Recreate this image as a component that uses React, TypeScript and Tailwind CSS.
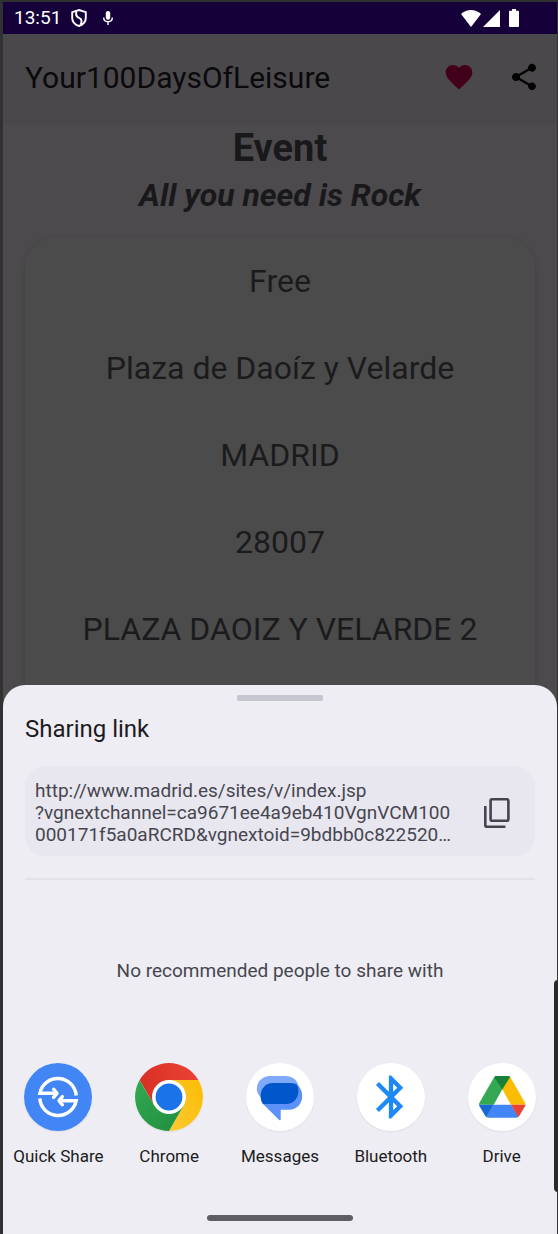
import type { ReactNode } from "react";

const details = [
  "Free",
  "Plaza de Daoíz y Velarde",
  "MADRID",
  "28007",
  "PLAZA DAOIZ Y VELARDE 2",
];

const link = [
  "http://www.madrid.es/sites/v/index.jsp",
  "?vgnextchannel=ca9671ee4a9eb410VgnVCM100",
  "000171f5a0aRCRD&vgnextoid=9bdbb0c822520…",
];

function QuickShareIcon() {
  return (
    <svg viewBox="0 0 68 68" className="size-full" aria-hidden="true">
      <circle cx="34" cy="34" r="34" fill="#4285f4" />
      <g fill="none" stroke="#fff" strokeWidth="3.4">
        <path d="M52.2 32.500A18.4 18.4 0 0 0 15.800 30.300H32.500" />
        <path d="M29.600 26.200L33 30.300L29.600 34.400" strokeLinejoin="round" strokeLinecap="round" />
        <path d="M15.800 35.500A18.4 18.4 0 0 0 52.200 37.700H35.500" />
        <path d="M38.400 33.600L35 37.700L38.400 41.800" strokeLinejoin="round" strokeLinecap="round" />
      </g>
    </svg>
  );
}

function ChromeIcon() {
  return (
    <svg viewBox="0 0 68 68" className="size-full" aria-hidden="true">
      <defs>
        <linearGradient id="cr" x1="0" x2="1">
          <stop offset="0" stopColor="#d93025" />
          <stop offset="1" stopColor="#ea4335" />
        </linearGradient>
        <linearGradient id="cy" x1="0" y1="1" x2="1" y2="0">
          <stop offset="0" stopColor="#fcc934" />
          <stop offset="1" stopColor="#fbbc04" />
        </linearGradient>
        <linearGradient id="cg" x1="1" y1="1" x2="0" y2="0">
          <stop offset="0" stopColor="#1e8e3e" />
          <stop offset="1" stopColor="#34a853" />
        </linearGradient>
      </defs>
      <path d="M4.6 17A34 34 0 0 1 63.4 17H34L19.3 42.5Z" fill="url(#cr)" />
      <path d="M63.4 17A34 34 0 0 1 34 68L48.7 42.5L34 17Z" fill="url(#cy)" />
      <path d="M34 68A34 34 0 0 1 4.6 17L19.3 42.5H48.7Z" fill="url(#cg)" />
      <circle cx="34" cy="34" r="17" fill="#fff" />
      <circle cx="34" cy="34" r="13.4" fill="#1a73e8" />
    </svg>
  );
}

function MessagesIcon() {
  return (
    <svg viewBox="0 0 68 68" className="size-full" aria-hidden="true">
      <path
        d="M24 13H39C45.500 13 50.500 16 52.300 22V35H16C12.500 32.500 10.800 29.500 10.800 26C10.800 18.500 16.500 13 24 13Z"
        fill="#80a8fb"
      />
      <path
        d="M26 20H49C53.500 22.500 56.200 27.500 56.200 33C56.200 41 50.500 46.800 43 46.800H34.700V56.300C34.700 57.300 33.800 57.500 33.200 56.900L17.500 41.500C14.500 38 14 33 15 30C16 24 20 20 26 20Z"
        fill="#5c90fa"
      />
      <path
        d="M27 20H41C46 20 50 20.500 51.200 22.500C52.200 25 52.500 27.500 52.300 29.500C51.500 36.500 46.500 41 40 41H17C15.300 38.500 14.700 35.500 14.700 32.500C14.700 25.500 20 20 27 20Z"
        fill="#0057cc"
      />
    </svg>
  );
}

function BluetoothIcon() {
  return (
    <svg viewBox="0 0 68 68" className="size-full" aria-hidden="true">
      <path
        transform="translate(8.200 8.200) scale(2.15)"
        d="M17.710 7.710L12 2h-1v7.590L6.410 5 5 6.410 10.590 12 5 17.590 6.410 19 11 14.410V22h1l5.710-5.710-4.300-4.290 4.300-4.290zM13 5.830l1.880 1.880L13 9.590V5.830zm1.880 10.460L13 18.170v-3.760l1.880 1.880z"
        fill="#1e88f5"
      />
    </svg>
  );
}

function DriveIcon() {
  return (
    <svg viewBox="0 0 68 68" className="size-full" aria-hidden="true">
      <path d="M28.500 13H34L34.300 26.300L25.700 41.700H11C11 40.800 11.200 40 11.700 39.200L26 14.500C26.600 13.500 27.500 13 28.500 13Z" fill="#34a853" />
      <path d="M34 13H40C41 13 42 13.500 42.500 14.500L56.800 39.200C57.200 40 57.400 40.800 57.400 41.700H43L34.300 26.300Z" fill="#fbbc04" />
      <path d="M26.300 14.200C26.900 13.400 27.600 13 28.500 13H40C41 13 41.800 13.400 42.200 14L34.300 26.500Z" fill="#188038" />
      <path d="M25.700 41.700H43L50.500 53.500C49.800 54.300 49 54.700 48 54.700H20.500C19.500 54.700 18.700 54.400 18 53.700Z" fill="#4285f4" />
      <path d="M11 41.700H25.700L18.200 53.900C17.700 53.500 17.300 53 17 52.500L11.700 43.500C11.200 42.800 11 42.300 11 41.700Z" fill="#1967d2" />
      <path d="M43 41.700H57.400C57.400 42.400 57.200 43 56.800 43.600L51.500 52.500C51.200 53.100 50.700 53.600 50.200 53.900Z" fill="#ea4335" />
    </svg>
  );
}

const targets: { name: string; icon: ReactNode }[] = [
  { name: "Quick Share", icon: <QuickShareIcon /> },
  { name: "Chrome", icon: <ChromeIcon /> },
  { name: "Messages", icon: <MessagesIcon /> },
  { name: "Bluetooth", icon: <BluetoothIcon /> },
  { name: "Drive", icon: <DriveIcon /> },
];

function StatusBar() {
  return (
    <div className="flex h-8 items-center bg-[#15003a] pr-[38px] pl-[11px] text-white">
      <span className="text-[19px] leading-[34px]">13:51</span>
      <svg viewBox="0 0 16 18" className="ml-2.5 h-[18px] w-4" fill="none" stroke="#fff" strokeWidth="1.9" aria-hidden="true">
        <path d="M8 1L14.800 3.200V9C14.800 12.800 12.500 15.500 8 17C3.500 15.500 1.200 12.800 1.200 9V3.200Z" />
        <path d="M5.500 2.500C4.200 6 5.500 7.800 8.500 9.200C11 10.500 11 13 9.500 16" />
      </svg>
      <svg viewBox="0 0 10 14" className="ml-4 h-3.5 w-2.5" aria-hidden="true">
        <rect x="2.800" y="0" width="4.400" height="8.800" rx="2.200" fill="#fff" />
        <path d="M.7 6.500C.7 9 2.600 10.700 5 10.700S9.300 9 9.300 6.500M5 10.700V14" fill="none" stroke="#fff" strokeWidth="1.400" />
      </svg>
      <svg viewBox="0 0 20 17" className="ml-auto h-[17px] w-5" fill="#fff" aria-hidden="true">
        <path d="M0 4C6-1.300 14-1.300 20 4L10 17Z" />
      </svg>
      <svg viewBox="0 0 17 17" className="ml-0.5 size-[17px]" fill="#fff" aria-hidden="true">
        <path d="M17 0V17H0Z" />
      </svg>
      <svg viewBox="0 0 10 18" className="ml-[9px] h-[18px] w-2.5" fill="#fff" aria-hidden="true">
        <path d="M3 0H7V1.700H9C9.600 1.700 10 2.100 10 2.700V17C10 17.600 9.600 18 9 18H1C.4 18 0 17.600 0 17V2.700C0 2.100 .4 1.700 1 1.700H3Z" />
      </svg>
    </div>
  );
}

function AppBar() {
  return (
    <header className="flex h-[86px] items-center bg-[#4a484b] pr-[17px] pl-[22px] shadow-[0_2px_4px_#00000014]">
      <h1 className="text-[30px] text-[#0a090b]">Your100DaysOfLeisure</h1>
      <button type="button" aria-label="Favourite" className="ml-auto">
        <svg viewBox="0 0 24 24" className="size-8" fill="#42001a" aria-hidden="true">
          <path d="M12 21.350l-1.450-1.320C5.400 15.360 2 12.280 2 8.500 2 5.420 4.420 3 7.500 3c1.740 0 3.410.810 4.500 2.090C13.090 3.810 14.760 3 16.500 3 19.580 3 22 5.420 22 8.500c0 3.780-3.400 6.860-8.550 11.540L12 21.350z" />
        </svg>
      </button>
      <button type="button" aria-label="Share" className="ml-[33px]">
        <svg viewBox="0 0 24 24" className="size-8" fill="#000" aria-hidden="true">
          <path d="M18 16.080c-.760 0-1.440.300-1.960.770L8.910 12.700c.050-.230.090-.460.090-.700s-.040-.470-.090-.700l7.050-4.110c.540.500 1.250.810 2.040.810 1.660 0 3-1.340 3-3s-1.340-3-3-3-3 1.340-3 3c0 .240.040.470.090.700L8.040 9.810C7.500 9.310 6.790 9 6 9c-1.660 0-3 1.340-3 3s1.340 3 3 3c.790 0 1.500-.310 2.040-.810l7.120 4.160c-.050.210-.080.430-.080.650 0 1.610 1.310 2.920 2.920 2.920s2.920-1.310 2.920-2.920-1.310-2.920-2.920-2.920z" />
        </svg>
      </button>
    </header>
  );
}

function ShareSheet() {
  return (
    <section
      role="dialog"
      aria-label="Sharing link"
      className="absolute inset-x-0 bottom-0 flex flex-col rounded-t-[22px] bg-[#eeedf3] pt-2.5"
    >
      <div className="mx-auto h-1.5 w-[86px] rounded-xs bg-[#c6c6d0]" />
      <h2 className="mt-3 px-[22px] text-2xl leading-8 text-[#1b1b21]">Sharing link</h2>
      <div className="mx-[22px] mt-[21px] flex items-center justify-between rounded-[20px] bg-[#e8e7ef] pt-3.5 pr-[25px] pb-2.5 pl-2.5">
        <p className="text-[19px] leading-[22px] text-[#46464f]">
          {link.map((line) => (
            <span key={line} className="block">
              {line}
            </span>
          ))}
        </p>
        <button type="button" aria-label="Copy link">
          <svg viewBox="0 0 26 30" className="h-[30px] w-[26px]" fill="none" stroke="#46434f" strokeWidth="2.600" aria-hidden="true">
            <rect x="6.600" y="1.300" width="17.800" height="21.400" rx="1.500" />
            <path d="M1.300 8V27.200C1.300 28.100 1.900 28.700 2.800 28.700H21.400" />
          </svg>
        </button>
      </div>
      <hr className="mx-[22px] mt-[22px] border-t-2 border-[#e3e2e8]" />
      <p className="mt-[79px] text-center text-[19px] leading-6 text-[#46464f]">
        No recommended people to share with
      </p>
      <ul className="mt-20 grid grid-cols-5">
        {targets.map((target) => (
          <li key={target.name}>
            <button type="button" className="flex w-full flex-col items-center">
              <span className="size-[68px] rounded-full bg-white shadow-[0_1px_2px_#00000010]">
                {target.icon}
              </span>
              <span className="mt-[13px] text-[17px] leading-6 whitespace-nowrap text-[#1b1b21]">
                {target.name}
              </span>
            </button>
          </li>
        ))}
      </ul>
      <div className="mx-auto mt-[47px] mb-[13px] h-1.5 w-[146px] rounded-full bg-[#5f5e63]" />
    </section>
  );
}

export default function App() {
  return (
    <div className="relative flex min-h-screen flex-col bg-[#303132] pt-0.5 pr-px pl-[3px] font-[Roboto,sans-serif]">
      <div className="relative flex flex-1 flex-col overflow-hidden bg-[#4d4a4d]">
        <StatusBar />
        <AppBar />
        <main className="flex flex-1 flex-col px-[22px]">
          <h2 className="mt-1.5 text-center text-[38px] leading-[44px] font-bold text-[#19181b]">Event</h2>
          <p className="mt-1 text-center text-[32px] leading-[42px] font-bold text-[#19181b] italic">
            All you need is Rock
          </p>
          <ul className="mt-[21px] flex flex-1 flex-col gap-[47px] rounded-t-[32px] bg-[#4b4b4b] pt-6 text-center text-[32px] leading-10 text-[#1b1b1d] shadow-[0_2px_6px_#00000026]">
            {details.map((line) => (
              <li key={line}>{line}</li>
            ))}
          </ul>
        </main>
        <ShareSheet />
      </div>
      <div className="absolute right-0 bottom-[42px] h-[212px] w-1 rounded-l-sm bg-[#29292a]" />
    </div>
  );
}
